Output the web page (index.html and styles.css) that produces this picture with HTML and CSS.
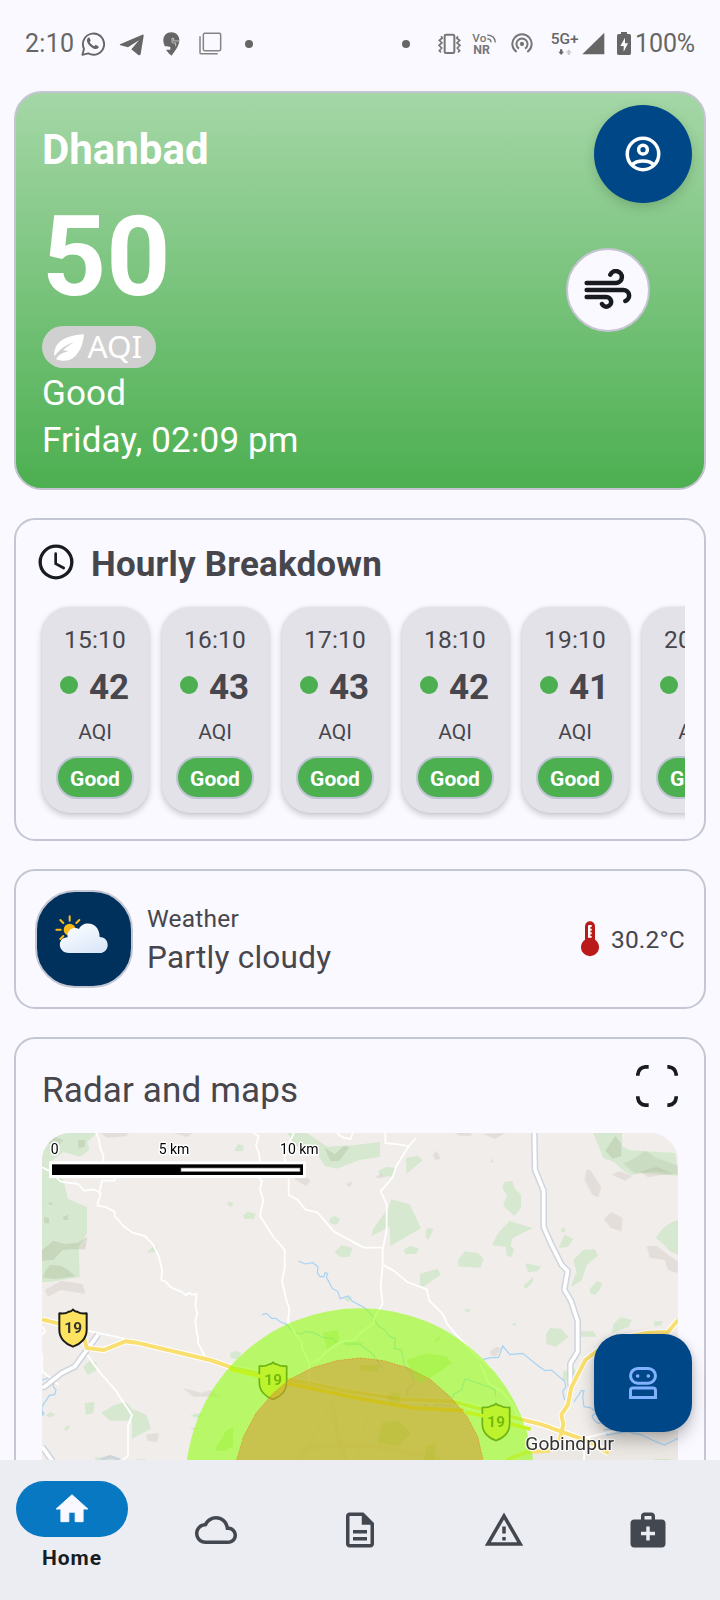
FILE: index.html
```
<!DOCTYPE html>
<html lang="en">
<head>
<meta charset="utf-8">
<meta name="viewport" content="width=device-width, initial-scale=1">
<title>Air quality</title>
<link rel="stylesheet" href="styles.css">
</head>
<body>
<div class="screen">
  <header class="status">
    <div class="status-left">
      <span class="status-time">2:10</span>
      <svg class="i-wa" width="24" height="24" viewBox="0 0 24 24" fill="none" stroke="#666" stroke-width="1.9"><path d="M1.400 22.800l1.600-6A10.600 10.600 0 1 1 7.200 21.300z" stroke-linejoin="round"/><path d="M8.800 6.300c-.5-1-1.200-.9-1.900-.3-2.300 2.300-.1 5.900 2.300 8.200 2.500 2.300 6 4 8 1.900 1-1.200.6-1.700-.3-2.200l-1.900-1c-.7-.3-1.200 1.300-1.800 1.300-1.500-.3-4-2.600-4.500-4.100 0-.6 1.200-1 .9-1.800z" fill="#666" stroke="none"/></svg>
      <svg class="i-tg" width="26" height="24" viewBox="0 0 78 72" fill="#666"><path d="M3 37L70 8q5-1 4 4L65 66q-2 6-8 2L37 52 60 25 27 46 4 40q-3-1-1-3z"/></svg>
      <svg class="i-pin" width="17" height="24" viewBox="0 0 51 72"><path d="M25 1C11 1 1 11 1 25c0 6 2 12 4 17 6 2 14 2 17 3v8H9c5 8 11 13 17 18 10-14 23-30 23-46C49 11 39 1 25 1z" fill="#666"/><path d="M50 27H32v-8h-5v11q0 3 4 3h7v10" fill="none" stroke="#c4c4ca" stroke-width="3"/></svg>
      <svg class="i-stack" width="23" height="23" viewBox="0 0 69 69" fill="none" stroke="#848484" stroke-width="4.500"><rect x="13" y="4" width="52" height="52" rx="4"/><path d="M3 13v49q0 3 3 3h50"/></svg>
      <span class="dot-mark"></span>
    </div>
    <div class="status-right">
      <span class="dot-mark"></span>
      <svg class="i-vib" width="23" height="22" viewBox="0 0 69 66" fill="none" stroke="#777" stroke-width="6"><rect x="20" y="5" width="29" height="55" rx="4"/><path d="M9 10l4 5-9 7 8 8-9 7 8 8-7 8 5 5M60 10l-4 5 9 7-8 8 9 7-8 8 7 8-5 5" stroke-width="5"/></svg>
      <svg class="i-vonr" width="25" height="23" viewBox="0 0 75 69" fill="#777"><text x="1" y="29" class="vo" textLength="42" lengthAdjust="spacingAndGlyphs">Vo</text><text x="4" y="65" class="nr" textLength="50" lengthAdjust="spacingAndGlyphs">NR</text><g fill="none" stroke="#777" stroke-width="4.500"><path d="M46 20q11 1 11 11M46 9q22 1 24 22"/></g></svg>
      <svg class="i-hot" width="22" height="21" viewBox="0 0 66 63" fill="none" stroke="#777" stroke-width="6"><circle cx="33" cy="33" r="6.500" fill="#777" stroke="none"/><path d="M24 47a16.500 16.500 0 1 1 18 0M17 57a29 29 0 1 1 32 0"/></svg>
      <svg class="i-5g" width="56" height="24" viewBox="0 0 168 72" fill="#666"><text x="-1" y="37" class="g5" textLength="84" lengthAdjust="spacingAndGlyphs">5G+</text><path d="M27 52h7v7h5L30.500 69 22 59h5z"/><path d="M50 69h7v-7h5L53.500 52 45 62h5z" fill="#ccc"/><path d="M160 2v65H94z"/></svg>
      <svg class="i-bat" width="14" height="23" viewBox="0 0 42 69"><path d="M12 0h18v6h7q5 0 5 5v53q0 5-5 5H5q-5 0-5-5V11q0-5 5-5h7z" fill="#666"/><path d="M24 17L10 42h10v17L33 34H24z" fill="#faf9ff"/></svg>
      <span class="status-pct">100%</span>
    </div>
  </header>

  <main class="content">
    <section class="card hero">
      <div class="hero-text">
        <h1 class="city">Dhanbad</h1>
        <div class="index">50</div>
        <div class="chip"><svg width="31" height="27" viewBox="0 0 93 81"><path d="M1 67C-2 35 19 5 90 1 88 34 73 66 48 77 34 82 15 81 6 75 18 58 28 56 45 51L27 49Q40 36 61 23 23 36 1 67z" fill="#fff"/></svg><span>AQI</span></div>
        <p class="hero-line">Good</p>
        <p class="hero-line">Friday, 02:09 pm</p>
      </div>
      <div class="wind"><svg width="48" height="42" viewBox="0 0 144 126" fill="none" stroke="#181c20" stroke-width="13.500" stroke-linecap="round"><path d="M8 42H97A18 18 0 1 0 79 17M8 63H118A17 17 0 0 1 124 96M8 84H67A14.500 14.500 0 1 1 54 105"/></svg></div>
    </section>

    <section class="card hourly">
      <div class="hourly-head">
        <svg width="36" height="36" viewBox="0 0 108 108" fill="none" stroke="#181c20"><circle cx="54" cy="54" r="47.500" stroke-width="10"/><path d="M53 29v30l24 13" stroke-width="8" stroke-linecap="round"/></svg>
        <h2>Hourly Breakdown</h2>
      </div>
      <div class="hours">
        <article class="hour"><time>15:10</time><div class="val"><i></i><b>42</b></div><span class="unit">AQI</span><span class="pill">Good</span></article>
        <article class="hour"><time>16:10</time><div class="val"><i></i><b>43</b></div><span class="unit">AQI</span><span class="pill">Good</span></article>
        <article class="hour"><time>17:10</time><div class="val"><i></i><b>43</b></div><span class="unit">AQI</span><span class="pill">Good</span></article>
        <article class="hour"><time>18:10</time><div class="val"><i></i><b>42</b></div><span class="unit">AQI</span><span class="pill">Good</span></article>
        <article class="hour"><time>19:10</time><div class="val"><i></i><b>41</b></div><span class="unit">AQI</span><span class="pill">Good</span></article>
        <article class="hour"><time>20:10</time><div class="val"><i></i><b>41</b></div><span class="unit">AQI</span><span class="pill">Good</span></article>
      </div>
    </section>

    <section class="card weather">
      <div class="weather-icon">
        <svg width="54" height="40" viewBox="0 0 162 120">
          <defs><linearGradient id="cloud" x1="0" y1="0" x2=".7" y2="1"><stop offset="0.300" stop-color="#f5f9ff"/><stop offset="1" stop-color="#dce7f8"/></linearGradient></defs>
          <g stroke="#fcbc1e" stroke-width="6" stroke-linecap="round"><path d="M44 4v13M16 15l9 9M73 15l-9 9M4 44h13M16 72l9-9"/></g>
          <circle cx="44" cy="44" r="18" fill="#fcb918"/>
          <path d="M42 114C6 114 6 67 38 67 34 40 60 34 72 42 82 16 134 18 134 66 167 67 165 114 134 114z" fill="url(#cloud)"/>
        </svg>
      </div>
      <div class="weather-text"><span class="label">Weather</span><span class="cond">Partly cloudy</span></div>
      <svg class="thermo" width="18" height="36" viewBox="0 0 54 108"><path d="M12 16a15 15 0 0 1 30 0v40a27 27 0 1 1-30 0z" fill="#ba1a1a"/><path d="M23 12h9v6h-4v5h4v6h-4v5h4v6h-4v5h4v5h-11V15z" fill="#fff"/></svg>
      <span class="temp">30.2°C</span>
    </section>

    <section class="card radar">
      <div class="radar-head">
        <h2>Radar and maps</h2>
        <svg width="42" height="42" viewBox="0 0 126 126" fill="none" stroke="#181c20" stroke-width="11"><path d="M5.500 32V28Q8 8 28 5.500h10M94 5.500h4Q118 8 120.500 28v4M120.500 94v4Q118 118 98 120.500h-4M38 120.500H28Q8 118 5.500 98v-4"/></svg>
      </div>
      <div class="map">
        <svg width="636" height="327" viewBox="126 39 1908 981">
          <defs>
            <path id="shield" d="M-40-43q18 2 27-5Q-6-47 0-54q6 7 13 6 9 7 27 5q2 0 1 4V7C41 32 22 50 0 57-22 50-41 32-41 7v-46q-1-4 1-4z"/>
          </defs>
          <rect x="126" y="39" width="1908" height="981" fill="#f0edea"/>
          <!-- woodland -->
          <g fill="#d6e8d0">
            <path d="M126 39H290L262 66 268 90 240 110 190 96 150 126 190 182 204 236 261 262V340L236 382 239 470 150 486 126 486z"/>
            <path d="M862 39H920L952 60 982 80 1060 76 1140 66V110L1078 120 1010 146 975 138 950 100 905 90 880 70z"/>
            <path d="M702 92l12-20 18 6-4 16zM680 250l10-5 11 4-8 13zM730 285l15-10 22 6-5 16-30-1zM442 398l14-16h16l-5 14z"/>
            <path d="M304 878L340 856 378 846 396 866 440 886 453 926 396 956V902H330zM254 850l30-4-4 34-22 4zM250 740l20-19 20 6v24l-27 14zM192 924l18-9-4 13-10 5zM138 886l14-10 14 8-16 9z"/>
            <path d="M990 295l14-7 17 10-12 17-20-7zM1004 396l20-20 34 8-10 26-26 2zM570 888l20-8 18 2-10 12zM690 700l15-8 20 6-10 18h-22zM1032 536l10-9 14 4-10 16zM286 1012h50v8h-50zM410 1017h26v3h-26z"/>
            <path d="M1166 262l8-24 55 15 34 72-92 53-2-58-54 28 4-20zM1218 114l36-7 14 14-48 40zM1133 154l26-13 30 3-8 24-34 3zM1276 350l4-26 20 2-14 34zM1212 388l18-9 26 6-8 16-32 2zM1375 418l20-24 40 6 16 18-10 25-66-4zM1260 462l52-16 10 18-50 35h-12zM1513 186l24-3 6 20 20 22v40l-20 22-34-30 12-30-14-24zM1476 376l18-36 34-37 70 21-60 30-6 24 10 10-8 24-14-6-2-26zM1576 430l48 10-12 14-28 2zM1570 498l30-27-2 16-20 20zM1682 326l14-2v12h-12zM1676 384l18-40 26 12-16 24zM1720 420l30-30 34-2 10 18-26 22-8 8-16 46-30 18 6-22 10-20zM1770 506l20-22 16 4-6 20-14 16-16-4zM1396 568l14-1v8h-14zM1534 611l16-2-6 10zM1638 642l12-18 34 2 22 24-38 30-28-8zM1738 634h42l10 16h-50zM1836 640l4-28 22-20 34 8-10 20zM1962 604h26l-4 12-22 3zM1780 39h86v40l24 12 136 8 8 68-110-8-30 6-20-10-32-30-32-10z"/>
            <path d="M1968 355Q1990 310 2034 300V404L2010 394 1990 372zM1690 754l34-10 2 16-20 24-18-3zM1962 1017h50v3h-50zM1030 665l60 2-4 8-50 2z"/>
          </g>
          <!-- relief shading -->
          <g fill="#7b8b62" opacity=".18">
            <path d="M126 390l34-28 34 10 40-4 28-18-6 38-40 0-28 2-28 30-34 2zM136 64l28-14 26 10-20 24zM150 435l32 2 26 16 18 16-60 8-38-4 8-20zM132 290l14 4 2 16h-14zM190 290l14-6v16h-14zM234 60l22 0-2 20-18 6zM142 250l14-4v10zM974 84l18 40 26-2 30-40-16-4-28 24zM1816 92l30-44 18 24v36l-26 8z"/>
            <path d="M1870 130l36-16 30-22 30 20 68 26v26l-70-10-60 6z" opacity=".7"/>
          </g>
          <g fill="#77614f" opacity=".1">
            <path d="M300 39h86l-8 10-56 4zM520 39h56l-14 12zM134 510l50-28 64 10 8 30-34-6-40-6-38 20zM548 804l56 14 28-8 28 22-30-2-50 0zM438 944l38-6-4 28-30-4zM874 168l40 0 18 14-14 16-24-14zM1036 192l22-8-8 18zM1366 39h48v8h-36zM1448 41l68-2-30 18zM1760 148l12 4 32 50-10 30-18-8-22-44zM1812 298l22-22 34 18-4 40-32-10zM1940 378l30 0 34 26 30 20v36l-30-10-10-30-44-6zM1834 164l24-10 38 14-20 14zM1920 156l50-16 50 22-40 4-36 6zM1298 106l12-14 12 24-16 4zM1472 128l4-16 4 16zM1470 694l20-14 14 4-16 26-16-6zM570 920l24 6-14 4zM1124 174l20-14 4 14z"/>
            <path d="M1560 1000Q1760 970 2034 880V1020H1560z" opacity=".35"/>
          </g>
          <!-- streams -->
          <g fill="none" stroke="#a6d3f5" stroke-width="3.500">
            <path d="M896 424l20 8 22-4 16 12-2 18 8 12h12l3-12 8 2-4 12 8 14 10 20 16 8 8 22 24-8 12 16 34 18 24 22 20 34 20 12 12 18 20 8-4 30 22 4 8 46 22 24 8 30-22 22 4 20 40 14 28 22 20-16 36 8 12-38 24-12 10-34 70 24 20 10 2 20M786 584l14-4 16 16 10-2 16 12 16 6 26 26 22 4 10-8 26 4 24 14 34 4 6 12 24-4 8 8 40 0 40 30 30 44"/>
            <path d="M1450 718l22-5 24-1 12-34 22 26 38-4 50 40 18 12 18-2 40 34 4 16-10 14 6 26M1722 846l22-34 8 0-4 18 4 30 22 4 16 14-14 10 6 12 12 10 20-4M1810 930l40-4-30 14v5l60-10 40 8 48 22 26 10 40-20M126 780l24-8 10 8 0 20 8 10-4 14-16 2-22 34v26l6-4-4-8"/>
          </g>
          <!-- minor roads -->
          <g fill="none" stroke="#fff" stroke-width="5.500" stroke-linejoin="round">
            <path d="M288 39l8 18 6 32 8 14v22M126 142l20 10 36 32 20 4 32 4 18 20 30-4 20 12-10 36 28 6 24 14v12l26 30 28 20 36 10 24 24 18 36 10 40-2 32 12 4 16 18 30 12 16 12 8-8 10 6 14-2-4 32 6 28-6 18 4 38 4 10v20l22 44M298 218l8-36h38v-8"/>
            <path d="M762 39l14 10-8 26 8 24 4 20-2 56 8 8-6 24 10 34-10 46 4 6 36 58 34 38v56l-8 36 12 56 10 28-4 40 30 48 12 12v20l22 44v66M934 730l24-12 18-20 44-32 42-6 18-20 40-30 4-20 24-38-6-50 6-66v-46l12-62 0-76-18-38 36-42 10-32 38-62 22-24"/>
            <path d="M882 39l-20 40-8 36 12 60 0 50 26 14 24 30 36 8 50 58 78 42 12 6h54M1152 436l32 18 38 32 58 22 8 34 40 40 14 30 26 32 60 62 46 40M1440 730l26 60 40 24 30 36 24 50 20 26"/>
            <path d="M258 700l44 60 44 50 50 76-12 30v92l-16 12M126 700v54l50 40M126 620l10 12-10 14M262 632l112 24M1010 39l20 14 22 4 6-18M1156 39v30l40 4 34 6M2034 928l-110 0-80 4-90 22-2 66"/>
          </g>
          <!-- railway and trunk road -->
          <g fill="none" stroke-linejoin="round">
            <path d="M1603 39l2 110 26 64v108l22 50 32 64 18 18-10 56 20 34 20 60v92l-22 36v60l4 10M294 644l-70 96-40 20-50 40-8 2M126 980l32 44" stroke="#d0d4de" stroke-width="20"/>
            <path d="M1603 39l2 110 26 64v108l22 50 32 64 18 18-10 56 20 34 20 60v92l-22 36v60l4 10M294 644l-70 96-40 20-50 40-8 2M126 980l32 44" stroke="#fff" stroke-width="11"/>
            <path d="M302 1020l28-10 30 10" stroke="#d0d4de" stroke-width="10"/>
          </g>
          <!-- highway 19 -->
          <g fill="none" stroke="#fff" stroke-width="18" stroke-linejoin="round"><path d="M126 598l120 30 14 56 52 6 64-26 34 4 220 52 76 26 80 16 260 52 160 24 150 6 90 24 180 46 140 50 60 36M2034 600l-30 36-60 2-110 22-78 60-42 82-10 52-20 30 6 30-12 50"/></g>
          <g fill="none" stroke="#f8df6f" stroke-width="12" stroke-linejoin="round"><path d="M126 598l120 30 14 56 52 6 64-26 34 4 220 52 76 26 80 16 260 52 160 24 150 6 90 24 180 46 140 50 60 36M2034 600l-30 36-60 2-110 22-78 60-42 82-10 52-20 30 6 30-12 50M1520 1020l60-24 70-4"/></g>
          <!-- town streets -->
          <g fill="none" stroke="#e7e4d5" stroke-width="14"><path d="M994 838l20 110 26 80M912 1000l8-18 190-6 220 44M900 1020l18-38"/><path d="M1004 834l-90 170M1106 870l-10 50-26 90" stroke-width="5"/></g>
          <use href="#shield" x="819" y="781" fill="#fde35f" stroke="#3f4b2a" stroke-width="5"/>
          <use href="#shield" x="1488" y="905" fill="#fde35f" stroke="#3f4b2a" stroke-width="5"/>
          <g class="route"><text x="820" y="796">19</text><text x="1489" y="920">19</text></g>
          <!-- air-quality zones -->
          <circle cx="1080" cy="1088.500" r="523.500" fill="#8fff08" opacity=".58"/>
          <path d="M697 1084L710 1020 731 950 768 880 820 820 870 778 936 744 1010 722 1080 714 1150 722 1224 744 1290 778 1350 830 1400 888 1433 950 1449 1020V1084z" fill="#d98e38" fill-opacity=".5" stroke="#e38b28" stroke-width="2.500" stroke-dasharray="5 3"/>
          <g fill="#a9bb20" opacity=".25"><path d="M1080 736h60l-6 20-54-6zM1160 834l20-18 22 6-4 26-20 2zM1148 906l50-4 34 40-40 36-60-10zM1278 978l30-8-4 50h-30z"/></g>
          <g fill="#8aec20" opacity=".3"><path d="M644 990l36-60 20-10-2 60-26 14zM968 638l46-8 4 30-36 28zM1220 720l60-20 60 10 16 20-90 60-20-6zM1300 664l24-18-10 18z"/></g>
          <!-- highway shades through the zones -->
          <path d="M690 748l76 18 20 4" fill="none" stroke="#c4f322" stroke-width="11"/>
          <path d="M862 790l218 46 160 28 150 8" fill="none" stroke="#cfc21e" stroke-width="11"/>
          <path d="M1395 876l56 12M1532 912l60 16" fill="none" stroke="#c4f322" stroke-width="11"/>
          <use href="#shield" x="219" y="623" fill="#fde35f" stroke="#1c1c1c" stroke-width="6"/>
          <g class="route dark"><text x="220" y="638">19</text></g>
          <text class="town" x="1576" y="989" textLength="266" lengthAdjust="spacingAndGlyphs">Gobindpur</text>
          <!-- scale bar -->
          <rect x="147" y="124" width="771" height="50" fill="#fff"/>
          <rect x="156" y="133" width="753" height="32"/>
          <rect x="543" y="144" width="357" height="11" fill="#fff" stroke="#777" stroke-width="2"/>
          <g class="scale"><text x="164" y="102">0</text><text x="522" y="102">5 km</text><text x="898" y="102">10 km</text></g>
        </svg>
      </div>
    </section>
  </main>

  <button class="fab account" aria-label="Account"><svg width="42" height="42" viewBox="0 0 24 24" fill="none" stroke="#fff" stroke-width="2"><circle cx="12" cy="12" r="9"/><circle cx="12" cy="9.500" r="2.500"/><path d="M5.700 18.200C7 16.900 9.500 16 12 16s5 .9 6.300 2.200"/></svg></button>
  <button class="fab bot" aria-label="Assistant"><svg width="28" height="32" viewBox="0 0 84 96" fill="none" stroke="#82b1ff" stroke-width="9"><rect x="4.500" y="4.500" width="75" height="44" rx="22"/><circle cx="26" cy="27" r="5.500" fill="#82b1ff" stroke="none"/><circle cx="58" cy="27" r="5.500" fill="#82b1ff" stroke="none"/><path d="M4.500 91.500V70q0-7 7-7h61q7 0 7 7v21.500z"/></svg></button>

  <nav class="nav">
    <a class="nav-item active"><span class="nav-pill"><svg width="38" height="38" viewBox="0 0 24 24" fill="#faf9ff" stroke="#faf9ff" stroke-width=".6" stroke-linejoin="round"><path d="M10 20v-6h4v6h5v-8h3L12 3 2 12h3v8z"/></svg></span><span>Home</span></a>
    <a class="nav-item"><svg width="42" height="42" viewBox="0 0 24 24"><path d="M12 6c2.620 0 4.880 1.860 5.390 4.430l.3 1.500 1.530.11c1.560.1 2.780 1.410 2.780 2.960 0 1.650-1.350 3-3 3H6c-2.210 0-4-1.790-4-4 0-2.050 1.530-3.760 3.560-3.970l1.070-.11.500-.950C8.080 7.140 9.940 6 12 6m0-2C9.110 4 6.600 5.640 5.350 8.040 2.340 8.360 0 10.910 0 14c0 3.310 2.690 6 6 6h13c2.760 0 5-2.240 5-5 0-2.640-2.050-4.780-4.650-4.960C18.670 6.590 15.640 4 12 4z"/></svg></a>
    <a class="nav-item"><svg width="42" height="42" viewBox="0 0 24 24"><path d="M8 16h8v2H8zm0-4h8v2H8zm6-10H6c-1.100 0-2 .9-2 2v16c0 1.100.89 2 1.990 2H18c1.100 0 2-.9 2-2V8l-6-6zm4 18H6V4h7v5h5v11z"/></svg></a>
    <a class="nav-item"><svg class="alert" width="42" height="42" viewBox="0 0 24 24"><path d="M12 5.990L19.530 19H4.470L12 5.990M12 2L1 21h22L12 2zm1 14h-2v2h2v-2zm0-6h-2v4h2v-4z"/></svg></a>
    <a class="nav-item"><svg width="42" height="42" viewBox="0 0 24 24"><path d="M20 6h-4V4c0-1.100-.9-2-2-2h-4c-1.100 0-2 .9-2 2v2H4c-1.100 0-2 .9-2 2v12c0 1.100.9 2 2 2h16c1.100 0 2-.9 2-2V8c0-1.100-.9-2-2-2zM10 4h4v2h-4V4zm6 11h-3v3h-2v-3H8v-2h3v-3h2v3h3v2z"/></svg></a>
  </nav>
</div>
</body>
</html>
```
FILE: styles.css
```
* { box-sizing: border-box; }
body { margin: 0; background: #faf9ff; font-family: Roboto, "Liberation Sans", sans-serif; color: #46464c; }
h1, h2, p { margin: 0; }
svg { display: block; flex: none; }
.screen { position: relative; width: 720px; height: 1600px; overflow: hidden; display: flex; flex-direction: column; }

.status { height: 91px; flex: none; display: flex; justify-content: space-between; padding: 0 25px; color: #666; font-size: 25px; }
.status-left, .status-right { display: flex; align-items: center; height: 87px; }
.status-time { width: 56px; letter-spacing: .3px; }
.status-pct { width: 60px; margin-left: 4px; letter-spacing: -.1px; }
.i-tg { margin-left: 14px; }
.i-pin { margin-left: 18px; }
.i-stack { margin-left: 19px; }
.dot-mark { width: 8px; height: 8px; border-radius: 50%; background: #666; margin-left: 23px; }
.i-vib { margin-left: 28px; }
.i-vonr { margin-left: 11px; overflow: visible; }
.i-hot { margin-left: 14px; }
.i-5g { margin-left: 18px; overflow: visible; }
.i-bat { margin-left: 10px; }
.vo { font: 500 33px Roboto, sans-serif; }
.nr { font: 700 36px Roboto, sans-serif; }
.g5 { font: 500 46px Roboto, sans-serif; }

.content { flex: 1; min-height: 0; overflow: hidden; display: flex; flex-direction: column; gap: 28px; padding: 0 14px; }
.card { flex: none; border: 2px solid #c3c6d3; border-radius: 21px; }

.hero { height: 399px; border-radius: 28px; padding: 32px 26px 0; display: flex; justify-content: space-between; color: #fff; border-color: #c4c4d2; background: linear-gradient(#a5d7a7, #4caf50) border-box; }
.city { font-size: 42px; line-height: 49px; font-weight: 700; }
.index { margin-top: 17px; font-size: 112px; line-height: 131px; font-weight: 700; }
.chip { margin: 4px 0 2px; width: 114px; height: 42px; border-radius: 21px; background: #d0d0d0; display: flex; align-items: center; gap: 3px; padding-left: 12px; font: 31.500px/42px "Noto Sans", sans-serif; }
.chip span { transform: translate(-.5px, -1.500px); }
.hero-line { font-size: 35px; line-height: 47px; letter-spacing: .15px; }
.wind { width: 84px; height: 84px; margin: 123px 28px 0 0; border-radius: 50%; border: 2px solid #c4c4d2; background: #faf9ff; display: flex; align-items: center; justify-content: center; }

.hourly { height: 323px; padding: 24px 19px 0; }
.hourly-head { display: flex; align-items: center; gap: 17px; height: 39px; padding: 0 0 3px 3px; }
.hourly h2 { font-size: 35px; line-height: 41px; font-weight: 700; position: relative; top: 2px; letter-spacing: .18px; }
.hours { display: flex; gap: 13px; height: 220px; margin-top: 17px; padding: 7px 7px 13px 6.500px; overflow: hidden; width: 650px; }
.hour { flex: none; width: 107px; height: 206px; border-radius: 28px; background: #e3e2e8; box-shadow: 0 3px 7px rgba(0,0,0,.2), 0 0 3px rgba(0,0,0,.08); display: flex; flex-direction: column; align-items: center; }
.hour time { margin-top: 18px; font-size: 24.500px; line-height: 29px; letter-spacing: .2px; }
.val { margin-top: 13px; display: flex; align-items: center; gap: 11px; font-size: 35px; line-height: 41px; width: 70px; }
.val i { width: 18px; height: 18px; border-radius: 50%; background: #4caf50; flex: none; margin-top: -6px; }
.unit { margin-top: 12px; font-size: 21px; line-height: 25px; }
.pill { margin-top: 11px; width: 78px; height: 43px; border: 2px solid #bcc3d1; border-radius: 22px; background: #4caf50; color: #fff; font-size: 21px; line-height: 42px; font-weight: 700; text-align: center; }

.weather { height: 140px; display: flex; align-items: center; padding: 0 19px; }
.weather-icon { width: 98px; height: 98px; margin-top: -1px; border-radius: 40px; border: 2px solid #c3c6d3; background: #00315d; display: flex; align-items: center; justify-content: center; padding-bottom: 8px; padding-right: 4px; }
.weather-text { margin-left: 14px; padding-top: 2px; flex: 1; display: flex; flex-direction: column; }
.label { font-size: 24.500px; line-height: 35px; letter-spacing: .2px; }
.cond { font-size: 31.500px; line-height: 43px; letter-spacing: .25px; }
.thermo { margin-right: 12px; }
.temp { font-size: 24.500px; line-height: 31px; letter-spacing: .2px; }

.radar { height: 600px; padding: 26px 26px 0; }
.radar-head { display: flex; justify-content: space-between; height: 42px; }
.radar h2 { font-weight: 400; font-size: 35px; line-height: 51px; letter-spacing: .15px; }
.map { margin-top: 26px; height: 500px; border-radius: 28px; overflow: hidden; background: #f0edea; }
.route { font: 700 46px Roboto, sans-serif; letter-spacing: 1px; text-anchor: middle; fill: #4c5b12; }
.dark { fill: #333; }
.town { font: 57px Roboto, sans-serif; fill: #333; stroke: #fff; stroke-width: 8px; paint-order: stroke; stroke-linejoin: round; stroke-opacity: .8; }
.scale { font: 42px Roboto, sans-serif; text-anchor: middle; stroke: #fff; stroke-width: 9px; paint-order: stroke; stroke-linejoin: round; }

.fab { position: absolute; width: 98px; height: 98px; left: 594px; padding: 0; border: 0; background: #004788; display: flex; align-items: center; justify-content: center; }
.account { top: 105px; border-radius: 50%; box-shadow: 0 4px 12px rgba(0,0,0,.16); }
.bot { top: 1334px; border-radius: 28px; box-shadow: 0 9px 16px rgba(0,0,0,.24), 0 0 6px rgba(0,0,0,.12); }

.nav { position: relative; height: 140px; flex: none; background: #ecedf3; display: grid; grid-template-columns: repeat(5, 144px); }
.nav-item { display: flex; flex-direction: column; align-items: center; justify-content: center; fill: #43474f; }
.active { justify-content: flex-start; padding-top: 21px; color: #181c20; font-size: 21px; line-height: 25px; font-weight: 700; letter-spacing: 1px; }
.nav-pill { width: 112px; height: 56px; margin-bottom: 9px; border-radius: 28px; background: #0878c3; display: flex; align-items: center; justify-content: center; }
```
